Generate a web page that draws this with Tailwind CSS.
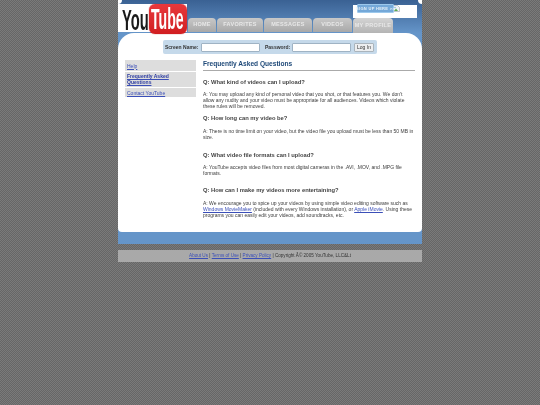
<!DOCTYPE html>
<html>
<head>
<meta charset="utf-8">
<title>YouTube - Frequently Asked Questions</title>
<script src="https://cdn.jsdelivr.net/npm/@tailwindcss/browser@4"></script>
</head>
<body class="h-[405px] overflow-hidden bg-[repeating-conic-gradient(#666666_0_25%,#7a7a7a_0_50%)] bg-[size:2px_2px] font-['Liberation_Sans',Arial,sans-serif] text-[5px] leading-[6px] text-[#3c3c3c]">

<div class="mx-auto w-[304px] blur-[.25px]">

    <!-- blue shell -->
    <div class="bg-[#6595c9]">

        <!-- header -->
        <div class="relative z-10 h-[33px] bg-gradient-to-b from-[#3a6193] to-[#6595c9]">
            <div class="absolute left-0 top-0 h-[4px] w-[4px] rounded-br-[4px] bg-white"></div>
            <div class="absolute right-0 top-0 h-[4px] w-[4px] rounded-bl-[4px] bg-white"></div>

            <!-- logo -->
            <div class="absolute left-0 top-[4px] h-[28px] w-[69px] bg-white">
                <div class="absolute left-[4px] top-[1px] origin-left scale-x-[.49] text-[30px] leading-[30px] font-bold text-[#1a1a1a]">You</div>
                <div class="absolute left-[31px] top-0 h-[30px] w-[38px] rounded-[6px] bg-gradient-to-b from-[#e8383c] to-[#d11d20] shadow-[0_0_1px_#a00]">
                    <span class="absolute left-[2px] top-[0px] origin-left scale-x-[.47] text-[30px] leading-[30px] font-bold text-white">Tube</span>
                </div>
            </div>

            <!-- sign up -->
            <div class="absolute left-[235px] top-[5px] flex h-[13px] w-[64px] items-start justify-end bg-white">
                <svg class="mr-[17px] h-[7px] w-[7px]" viewBox="0 0 7 7"><path d="M.5.5h4l2 2v4h-6z" fill="#eef2f6" stroke="#9aa3ad" stroke-width=".6"/><path d="M1 6l2-2.5L5 6z" fill="#5aa84f"/><circle cx="2" cy="2.5" r=".8" fill="#8fb7e0"/></svg>
            </div>
            <div class="absolute left-[239px] top-[4px] flex h-[9px] w-[37px] items-center justify-center rounded-[1px] border border-[#9cc8ec] bg-[#74a8d8] text-[4px] leading-none font-bold tracking-[.3px] whitespace-nowrap text-[#e6f0f8]">SIGN UP HERE &gt;&gt;</div>

            <!-- tabs -->
            <div class="absolute top-[18px] left-[70px] flex items-start gap-[1px] text-[5.5px] leading-none font-bold tracking-[.3px] text-[#e8e8e8]">
                <div class="flex h-[14px] w-[28px] items-center justify-center rounded-t-[4px] bg-gradient-to-b from-[#c8c8c8] to-[#a8a8a8]">HOME</div>
                <div class="flex h-[14px] w-[46px] items-center justify-center rounded-t-[4px] bg-gradient-to-b from-[#c8c8c8] to-[#a8a8a8]">FAVORITES</div>
                <div class="flex h-[14px] w-[48px] items-center justify-center rounded-t-[4px] bg-gradient-to-b from-[#c8c8c8] to-[#a8a8a8]">MESSAGES</div>
                <div class="flex h-[14px] w-[39px] items-center justify-center rounded-t-[4px] bg-gradient-to-b from-[#c8c8c8] to-[#a8a8a8]">VIDEOS</div>
                <div class="flex h-[15px] w-[40px] items-center justify-center rounded-t-[4px] bg-gradient-to-b from-[#d4d4d4] to-[#b4b4b4]">MY PROFILE</div>
            </div>
        </div>

        <!-- white panel -->
        <div class="h-[199px] rounded-t-[16px] rounded-b-[4px] bg-white px-[7px] pt-[7px]">

            <!-- login bar -->
            <div class="mx-auto flex h-[14px] w-[214px] items-center rounded-[2px] bg-[#c5d9ea] pl-[2px] font-bold text-[#333]">
                <span class="w-[36px] whitespace-nowrap">Screen Name:</span>
                <span class="h-[9px] w-[59px] rounded-[1px] border border-[#9fb3c4] bg-white"></span>
                <span class="ml-[5px] w-[27px]">Password:</span>
                <span class="h-[9px] w-[59px] rounded-[1px] border border-[#9fb3c4] bg-white"></span>
                <span class="ml-[3px] flex h-[9px] w-[20px] items-center justify-center rounded-[1px] border border-[#aab4bc] bg-[#eceef0] font-normal">Log In</span>
            </div>

            <div class="mt-[6px] flex">

                <!-- sidebar -->
                <div class="w-[71px] shrink-0 text-[#3b4fb8] underline">
                    <div class="flex h-[11px] items-center bg-[#dddddd] pl-[2px]">Help</div>
                    <div class="mt-[1px] h-[15px] bg-[#dddddd] pl-[2px] pt-[1px] font-bold text-[#2a3aa0]">Frequently Asked<br>Questions</div>
                    <div class="mt-[1px] flex h-[9px] items-center bg-[#dddddd] pl-[2px]">Contact YouTube</div>
                </div>

                <!-- faq -->
                <div class="ml-[7px] w-[213px]">
                    <div class="border-b border-[#aaaaaa] pb-[2px] text-[6.6px] leading-[8px] font-bold text-[#1d4878]">Frequently Asked Questions</div>

                    <div class="mt-[8px] text-[5.8px] leading-[7px] font-bold text-[#444]">Q: What kind of videos can I upload?</div>
                    <p class="mt-[5px]">A: You may upload any kind of personal video that you shot, or that features you. We don't allow any nudity and your video must be appropriate for all audiences. Videos which violate these rules will be removed.</p>

                    <div class="mt-[5.5px] text-[5.8px] leading-[7px] font-bold text-[#444]">Q: How long can my video be?</div>
                    <p class="mt-[6.5px]">A: There is no time limit on your video, but the video file you upload must be less than 50 MB in size.</p>

                    <div class="mt-[11.5px] text-[5.8px] leading-[7px] font-bold text-[#444]">Q: What video file formats can I upload?</div>
                    <p class="mt-[5.5px]">A: YouTube accepts video files from most digital cameras in the .AVI, .MOV, and .MPG file formats.</p>

                    <div class="mt-[10.5px] text-[5.8px] leading-[7px] font-bold text-[#444]">Q: How can I make my videos more entertaining?</div>
                    <p class="mt-[6.5px]">A: We encourage you to spice up your videos by using simple video editing software such as <a class="text-[#3b4fb8] underline">Windows MovieMaker</a> (included with every Windows installation), or <a class="text-[#3b4fb8] underline">Apple iMovie</a>. Using these programs you can easily edit your videos, add soundtracks, etc.</p>
                </div>
            </div>
        </div>

        <!-- bottom bar -->
        <div class="h-[12px] rounded-b-[3px]"></div>
    </div>

    <!-- footer -->
    <div class="mt-[6px] flex h-[12px] items-center justify-center bg-[#a9a9a9] text-[4.6px] text-[#333]">
        <a class="text-[#3b4fb8] underline">About Us</a>&nbsp;|&nbsp;<a class="text-[#3b4fb8] underline">Terms of Use</a>&nbsp;|&nbsp;<a class="text-[#3b4fb8] underline">Privacy Policy</a>&nbsp;| Copyright Â© 2005 YouTube, LLC&amp;Lt
    </div>
</div>

</body>
</html>
